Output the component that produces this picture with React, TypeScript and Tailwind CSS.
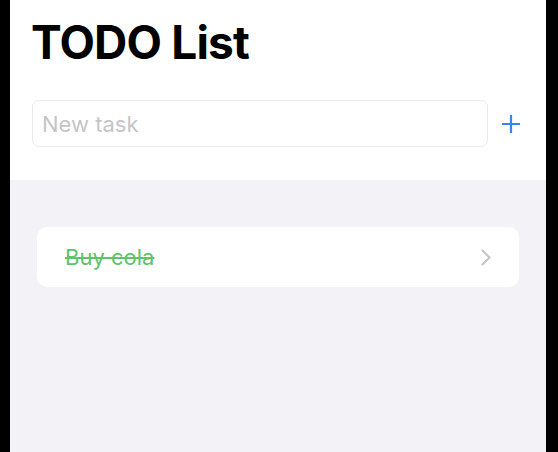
import * as React from "react"

export default function App() {
  const [task, setTask] = React.useState("")

  return (
    <div className="flex h-[452px] w-full bg-black pl-[10px] pr-[12px] font-['Inter',sans-serif]">
      <div className="flex flex-1 flex-col">
        <header className="h-[180px] bg-white pl-[22px] pr-[25px] pt-[19px]">
          <h1 className="-ml-[1px] text-[46px] font-bold leading-none tracking-[-0.8px] text-black">TODO List</h1>
          <div className="mt-[35px] flex items-center gap-[13px]">
            <input
              value={task}
              onChange={(e) => setTask(e.target.value)}
              placeholder="New task"
              className="h-[47px] flex-1 rounded-[7px] border border-[#e9e9ec] px-[9px] pt-[1px] text-[22px] text-black outline-none placeholder:text-[#c5c5c8]"
            />
            <button className="flex h-[20px] w-[20px] items-center justify-center text-[#3a82f7]">
              <svg viewBox="0 0 20 20" className="h-[20px] w-[20px]" fill="none" stroke="currentColor" strokeWidth="2.2">
                <path d="M10 1v18M1 10h18" />
              </svg>
            </button>
          </div>
        </header>
        <main className="flex-1 bg-[#f2f2f7] px-[27px] pt-[47px]">
          <div className="flex h-[60px] items-center justify-between rounded-[10px] bg-white pl-[28px] pr-[28px]">
            <span className="text-[22px] text-[#5ec46a] line-through">Buy cola</span>
            <svg viewBox="0 0 10 17" className="h-[17px] w-[10px]" fill="none" stroke="#c4c4c6" strokeWidth="2" strokeLinecap="round" strokeLinejoin="round">
              <path d="M1.5 1.5l7 7-7 7" />
            </svg>
          </div>
        </main>
      </div>
    </div>
  )
}
